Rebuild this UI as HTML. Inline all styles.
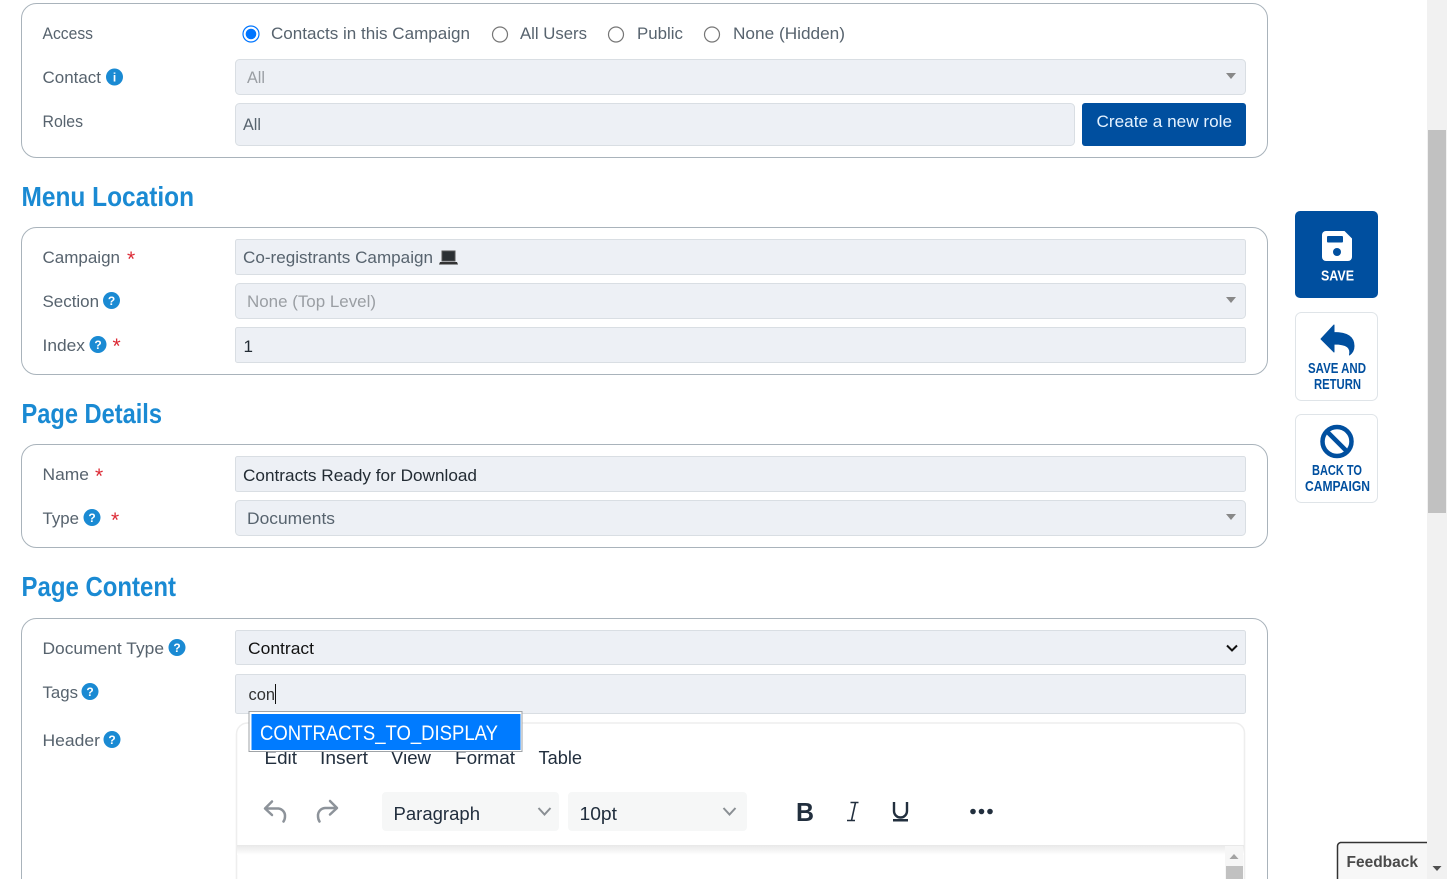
<!DOCTYPE html>
<html lang="en"><head><meta charset="utf-8"><title>Page Editor</title>
<style>
html,body{margin:0;padding:0;background:#fff;overflow:hidden;width:1447px;height:879px}
svg{display:block;position:absolute;left:0;top:0}
text{font-family:"Liberation Sans",sans-serif;font-size:17px;fill:#57636e}
.p{fill:#fff;stroke:#a9b3bb;stroke-width:1}
.i{fill:#edf0f5;stroke:#d9dee3;stroke-width:1}
.h{font-size:28px;font-weight:bold;fill:#1a8ad3}
.v{fill:#222b33}
.g{fill:#9a9ea3}
.r{fill:#dc2a35;font-size:21px}
.q{fill:#fff;font-size:12px;font-weight:bold;text-anchor:middle}
.c{fill:#1a8ad3}
.b{font-size:15px;font-weight:bold;fill:#004f9f}
.m{fill:#222f3e;font-size:18px}
.ra{fill:#fff;stroke:#767676;stroke-width:1.2}
.ar{fill:#888}
.ch{fill:none;stroke:#8a8f94;stroke-width:2}
</style></head>
<body>
<svg width="1447" height="879" viewBox="0 0 1447 879" xmlns="http://www.w3.org/2000/svg">
<defs><linearGradient id="sh" x1="0" y1="0" x2="0" y2="1"><stop offset="0" stop-color="#e8e8e8"/><stop offset="1" stop-color="#fff"/></linearGradient></defs>
<!-- panels -->
<rect class="p" x="21.5" y="3.5" width="1246" height="154" rx="15"/>
<rect class="p" x="21.5" y="227.5" width="1246" height="147" rx="15"/>
<rect class="p" x="21.5" y="444.5" width="1246" height="103" rx="15"/>
<rect class="p" x="21.5" y="618.5" width="1246" height="300" rx="15"/>
<!-- Access panel -->
<text x="42.500" y="39" textLength="50.500" lengthAdjust="spacingAndGlyphs">Access</text>
<circle cx="251" cy="34" r="8" fill="#fff" stroke="#0075ff" stroke-width="1.2"/><circle cx="251" cy="34" r="5.3" fill="#0075ff"/>
<text x="271" y="39" textLength="199" lengthAdjust="spacingAndGlyphs">Contacts in this Campaign</text>
<circle class="ra" cx="500" cy="34.500" r="7.500"/><text x="520" y="39" textLength="67" lengthAdjust="spacingAndGlyphs">All Users</text>
<circle class="ra" cx="616" cy="34.500" r="7.500"/><text x="637" y="39" textLength="46" lengthAdjust="spacingAndGlyphs">Public</text>
<circle class="ra" cx="712" cy="34.500" r="7.500"/><text x="733" y="39" textLength="112" lengthAdjust="spacingAndGlyphs">None (Hidden)</text>
<text x="42.500" y="83" textLength="58.500" lengthAdjust="spacingAndGlyphs">Contact</text>
<circle class="c" cx="114.500" cy="77" r="8.500"/><text class="q" x="114.500" y="81.500">i</text>
<rect class="i" x="235.500" y="59.500" width="1010" height="35" rx="4"/>
<text class="g" x="247" y="83" textLength="18" lengthAdjust="spacingAndGlyphs">All</text>
<path class="ar" d="M1226 73h10l-5 6z"/>
<text x="42.500" y="127" textLength="40.500" lengthAdjust="spacingAndGlyphs">Roles</text>
<rect class="i" x="235.500" y="103.500" width="839" height="42" rx="4"/>
<text x="243" y="130" textLength="18" lengthAdjust="spacingAndGlyphs">All</text>
<rect x="1082" y="103" width="164" height="43" rx="3" fill="#004f9f"/>
<text x="1096.500" y="127" textLength="135.500" lengthAdjust="spacingAndGlyphs" style="fill:#e4f2ff">Create a new role</text>
<!-- Menu Location -->
<text class="h" x="21.500" y="206" textLength="172.500" lengthAdjust="spacingAndGlyphs">Menu Location</text>
<text x="42.500" y="263" textLength="77.500" lengthAdjust="spacingAndGlyphs">Campaign</text>
<text class="r" x="127" y="266">*</text>
<rect class="i" x="235.500" y="239.500" width="1010" height="35" rx="2"/>
<text x="243" y="263" textLength="190" lengthAdjust="spacingAndGlyphs">Co-registrants Campaign</text>
<path d="M442 251h13v10h-13z" fill="#2b2f33" stroke="#555" stroke-width="1"/><path d="M440 262h17l1 2.500h-19z" fill="#333"/>
<text x="42.500" y="307" textLength="56.500" lengthAdjust="spacingAndGlyphs">Section</text>
<circle class="c" cx="111.500" cy="300.500" r="8.500"/><text class="q" x="111.500" y="305">?</text>
<rect class="i" x="235.500" y="283.500" width="1010" height="35" rx="4"/>
<text class="g" x="247" y="307" textLength="129" lengthAdjust="spacingAndGlyphs">None (Top Level)</text>
<path class="ar" d="M1226 297h10l-5 6z"/>
<text x="42.500" y="351" textLength="42.500" lengthAdjust="spacingAndGlyphs">Index</text>
<circle class="c" cx="98" cy="344.500" r="8.500"/><text class="q" x="98" y="349">?</text>
<text class="r" x="112.500" y="353">*</text>
<rect class="i" x="235.500" y="327.500" width="1010" height="35" rx="2"/>
<text class="v" x="243.500" y="352">1</text>
<!-- Page Details -->
<text class="h" x="21.500" y="423" textLength="140.500" lengthAdjust="spacingAndGlyphs">Page Details</text>
<text x="42.500" y="480" textLength="46.500" lengthAdjust="spacingAndGlyphs">Name</text>
<text class="r" x="95" y="483">*</text>
<rect class="i" x="235.500" y="456.500" width="1010" height="35" rx="2"/>
<text class="v" x="243" y="481" textLength="234" lengthAdjust="spacingAndGlyphs">Contracts Ready for Download</text>
<text x="42.500" y="524" textLength="36.500" lengthAdjust="spacingAndGlyphs">Type</text>
<circle class="c" cx="92" cy="517.500" r="8.500"/><text class="q" x="92" y="522">?</text>
<text class="r" x="111" y="527">*</text>
<rect class="i" x="235.500" y="500.500" width="1010" height="35" rx="4"/>
<text x="247" y="524" textLength="88" lengthAdjust="spacingAndGlyphs">Documents</text>
<path class="ar" d="M1226 514h10l-5 6z"/>
<!-- Page Content -->
<text class="h" x="21.500" y="596" textLength="154.500" lengthAdjust="spacingAndGlyphs">Page Content</text>
<text x="42.500" y="654" textLength="121.500" lengthAdjust="spacingAndGlyphs">Document Type</text>
<circle class="c" cx="177" cy="647.500" r="8.500"/><text class="q" x="177" y="652">?</text>
<rect class="i" x="235.500" y="630.500" width="1010" height="34" rx="2"/>
<text x="248" y="654" textLength="66" lengthAdjust="spacingAndGlyphs" style="fill:#111">Contract</text>
<path d="M1227 645.500l5 5 5-5" fill="none" stroke="#111" stroke-width="2"/>
<text x="42.500" y="698" textLength="35.500" lengthAdjust="spacingAndGlyphs">Tags</text>
<circle class="c" cx="90" cy="691.500" r="8.500"/><text class="q" x="90" y="696">?</text>
<rect class="i" x="235.500" y="674.500" width="1010" height="39" rx="2"/>
<text x="248.500" y="700" textLength="26.500" lengthAdjust="spacingAndGlyphs" style="fill:#333">con</text>
<rect x="275" y="684" width="1" height="20" fill="#111"/>
<text x="42.500" y="746" textLength="57.500" lengthAdjust="spacingAndGlyphs">Header</text>
<circle class="c" cx="112" cy="739.500" r="8.500"/><text class="q" x="112" y="744">?</text>
<!-- editor -->
<path d="M236.500 879V734a11 11 0 0 1 11-11h987a10 10 0 0 1 10 10v146" fill="#fff" stroke="#eeeeee" stroke-width="1.500"/>
<text class="m" x="264.500" y="764" textLength="32.500" lengthAdjust="spacingAndGlyphs">Edit</text>
<text class="m" x="320" y="764" textLength="48" lengthAdjust="spacingAndGlyphs">Insert</text>
<text class="m" x="391" y="764" textLength="40" lengthAdjust="spacingAndGlyphs">View</text>
<text class="m" x="455" y="764" textLength="60" lengthAdjust="spacingAndGlyphs">Format</text>
<text class="m" x="538.500" y="764" textLength="43.500" lengthAdjust="spacingAndGlyphs">Table</text>
<path d="M272 801.500l-7 7 7 6.500M266 808.500h12.500a7.500 7.500 0 0 1 6.500 8c0 2-.5 3.500-1.500 5" fill="none" stroke="#8d939a" stroke-width="2.500" stroke-linecap="round" stroke-linejoin="round"/>
<path d="M330 801l7 7-7 6.500M336 808h-11a7.500 7.500 0 0 0-7 8c0 2 .5 4 1.500 5.500" fill="none" stroke="#8d939a" stroke-width="2.500" stroke-linecap="round" stroke-linejoin="round"/>
<rect x="382" y="792" width="177" height="39" rx="4" fill="#f6f7f7"/>
<text class="m" x="393.500" y="820" textLength="86.500" lengthAdjust="spacingAndGlyphs">Paragraph</text>
<path class="ch" d="M538.500 808l6 6.500 6-6.500"/>
<rect x="568" y="792" width="179" height="39" rx="4" fill="#f6f7f7"/>
<text class="m" x="579.500" y="820" textLength="37.500" lengthAdjust="spacingAndGlyphs">10pt</text>
<path class="ch" d="M723.500 808l6 6.500 6-6.500"/>
<text x="796" y="821" textLength="18" lengthAdjust="spacingAndGlyphs" style="font-size:26px;font-weight:bold;fill:#222f3e">B</text>
<path d="M850.500 802.500h8M847 820.500h8M855.500 802.500l-4 18" fill="none" stroke="#222f3e" stroke-width="1.600"/>
<path d="M894 802v9a6.500 6.500 0 0 0 13 0v-9" fill="none" stroke="#222f3e" stroke-width="2.400"/><rect x="893" y="819" width="15" height="2.500" fill="#222f3e"/>
<circle cx="973" cy="811.500" r="2.800" fill="#222f3e"/><circle cx="981.500" cy="811.500" r="2.800" fill="#222f3e"/><circle cx="990" cy="811.500" r="2.800" fill="#222f3e"/>
<rect x="237" y="845" width="1007" height="10" fill="url(#sh)"/>
<rect x="1225" y="846" width="18" height="33" fill="#f6f6f6"/>
<path d="M1229.500 859l4.500-5 4.500 5z" fill="#a3a3a3"/>
<rect x="1226" y="866" width="17" height="13" fill="#c1c1c1"/>
<!-- autocomplete -->
<rect x="249" y="711.500" width="273" height="40" fill="#fff" stroke="#9fa3a7" stroke-width="1"/>
<rect x="251.500" y="714" width="269" height="36" fill="#007bff"/>
<text x="260" y="740" textLength="238" lengthAdjust="spacingAndGlyphs" style="font-size:21px;fill:#fff">CONTRACTS_TO_DISPLAY</text>
<!-- side buttons -->
<rect x="1295" y="211" width="83" height="87" rx="5" fill="#004f9f"/>
<path d="M1326 231h18.500l7.500 7.500V257a4 4 0 0 1-4 4h-22a4 4 0 0 1-4-4v-22a4 4 0 0 1 4-4z" fill="#fff"/>
<rect x="1327" y="236" width="16" height="6.500" rx="1" fill="#004f9f"/><circle cx="1337" cy="252" r="4" fill="#004f9f"/>
<text x="1321" y="280.500" textLength="33" lengthAdjust="spacingAndGlyphs" class="b" style="fill:#fff">SAVE</text>
<rect x="1295.500" y="312.500" width="82" height="88" rx="6" fill="#fff" stroke="#dfe4e8"/>
<path d="M1321 339l13-14v7.500c11 0 20 3 20 13.500 0 4-1.800 7-4.500 9 1.500-7-2-11-15.500-11V352z" fill="#004f9f" stroke="#004f9f" stroke-width="1" stroke-linejoin="round"/>
<text x="1308" y="373" textLength="58" lengthAdjust="spacingAndGlyphs" class="b">SAVE AND</text>
<text x="1314" y="389" textLength="47" lengthAdjust="spacingAndGlyphs" class="b">RETURN</text>
<rect x="1295.500" y="414.500" width="82" height="88" rx="6" fill="#fff" stroke="#dfe4e8"/>
<circle cx="1337" cy="441.500" r="14.500" fill="none" stroke="#004f9f" stroke-width="4.500"/><path d="M1326.500 431l21 21" stroke="#004f9f" stroke-width="4.500"/>
<text x="1312" y="475" textLength="50" lengthAdjust="spacingAndGlyphs" class="b">BACK TO</text>
<text x="1305" y="491" textLength="65" lengthAdjust="spacingAndGlyphs" class="b">CAMPAIGN</text>
<!-- scrollbar -->
<rect x="1427" y="0" width="20" height="879" fill="#f1f1f1"/>
<rect x="1428" y="130" width="18" height="383" fill="#c1c1c1"/>
<path d="M1432.500 866h9l-4.500 5z" fill="#505050"/>
<!-- feedback -->
<path d="M1337.500 879V846a4 4 0 0 1 3-3.500h86.500V879z" fill="#f7f7f7"/>
<path d="M1337.500 879V846a4 4 0 0 1 3-3.500h86.500" fill="none" stroke="#333" stroke-width="1.500"/>
<text x="1346.500" y="867" textLength="71.500" lengthAdjust="spacingAndGlyphs" style="font-size:16px;font-weight:bold;fill:#4a4a4a">Feedback</text>
</svg>
</body></html>
